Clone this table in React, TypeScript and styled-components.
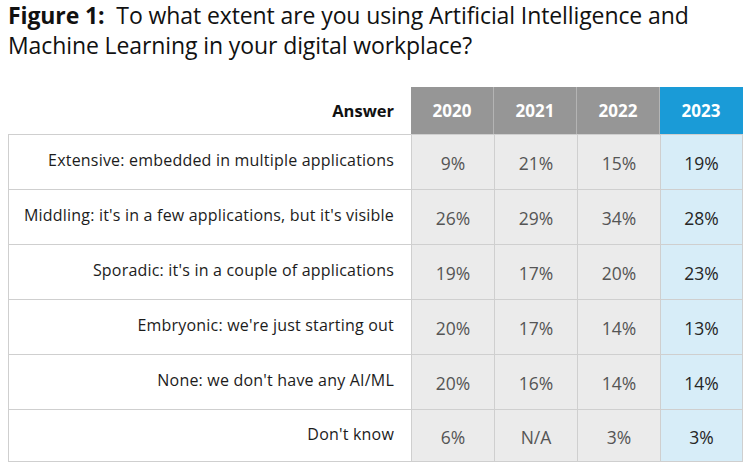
import styled, { createGlobalStyle } from 'styled-components';

const GlobalStyle = createGlobalStyle`
  html, body {
    margin: 0;
    padding: 0;
    background: #ffffff;
  }
`;

type Row = {
  answer: string;
  values: string[];
};

const years = ['2020', '2021', '2022', '2023'];

const rows: Row[] = [
  { answer: 'Extensive: embedded in multiple applications', values: ['9%', '21%', '15%', '19%'] },
  { answer: "Middling: it's in a few applications, but it's visible", values: ['26%', '29%', '34%', '28%'] },
  { answer: "Sporadic: it's in a couple of applications", values: ['19%', '17%', '20%', '23%'] },
  { answer: "Embryonic: we're just starting out", values: ['20%', '17%', '14%', '13%'] },
  { answer: "None: we don't have any AI/ML", values: ['20%', '16%', '14%', '14%'] },
  { answer: "Don't know", values: ['6%', 'N/A', '3%', '3%'] },
];

export default function App() {
  return (
    <>
      <GlobalStyle />
      <Page>
        <Title>
          <strong>Figure 1:</strong>&nbsp; To what extent are you using Artificial Intelligence and
          <br />
          Machine Learning in your digital workplace?
        </Title>

        <Table>
          <HeadLabel>Answer</HeadLabel>
          {years.map((year, i) => (
            <HeadCell key={year} $current={i === years.length - 1}>
              {year}
            </HeadCell>
          ))}

          {rows.map((row, r) => (
            <RowGroup key={row.answer}>
              <AnswerCell $last={r === rows.length - 1}>{row.answer}</AnswerCell>
              {row.values.map((value, i) => (
                <ValueCell
                  key={years[i]}
                  $current={i === years.length - 1}
                  $last={r === rows.length - 1}
                >
                  {value}
                </ValueCell>
              ))}
            </RowGroup>
          ))}
        </Table>
      </Page>
    </>
  );
}

const Page = styled.div`
  width: 750px;
  height: 470px;
  padding: 0 0 0 8px;
  box-sizing: border-box;
  overflow: hidden;
`;

const Title = styled.h1`
  margin: 0;
  font-family: 'Open Sans', 'Liberation Sans', sans-serif;
  font-weight: 400;
  font-size: 23px;
  line-height: 30px;
  letter-spacing: -0.1px;
  color: #111111;
  white-space: nowrap;

  strong {
    font-weight: 700;
  }
`;

const Table = styled.div`
  margin-top: 27px;
  display: grid;
  grid-template-columns: 403px repeat(4, 83px);
  grid-template-rows: 47px repeat(5, 55px) 53px;
  font-family: 'Open Sans', 'Liberation Sans', sans-serif;
`;

const RowGroup = styled.div`
  display: contents;
`;

const HeadLabel = styled.div`
  display: flex;
  align-items: center;
  justify-content: flex-end;
  padding-right: 17px;
  font-size: 16.5px;
  font-weight: 700;
  color: #111111;
`;

const HeadCell = styled.div<{ $current: boolean }>`
  display: flex;
  align-items: center;
  justify-content: center;
  background: ${(p) => (p.$current ? '#1a9bd7' : '#969696')};
  border-right: 1px solid ${(p) => (p.$current ? '#1a9bd7' : '#b4b4b4')};
  font-size: 17px;
  font-weight: 700;
  color: #ffffff;
`;

const AnswerCell = styled.div<{ $last: boolean }>`
  display: flex;
  align-items: center;
  justify-content: flex-end;
  padding: 0 17px 4px 0;
  border-top: 1px solid #cfcfcf;
  border-left: 1px solid #cfcfcf;
  border-bottom: ${(p) => (p.$last ? '1px solid #cfcfcf' : 'none')};
  font-size: 16px;
  letter-spacing: 0.2px;
  color: #1c1c1c;
  white-space: nowrap;
`;

const ValueCell = styled.div<{ $current: boolean; $last: boolean }>`
  display: flex;
  align-items: center;
  justify-content: center;
  padding-top: 2px;
  background: ${(p) => (p.$current ? '#d7edf8' : '#ebebeb')};
  border-top: 1px solid #cfcfcf;
  border-left: 1px solid #cfcfcf;
  border-bottom: ${(p) => (p.$last ? '1px solid #cfcfcf' : 'none')};
  border-right: ${(p) => (p.$current ? '1px solid #cfcfcf' : 'none')};
  font-size: 17.5px;
  color: ${(p) => (p.$current ? '#262626' : '#555555')};
`;
